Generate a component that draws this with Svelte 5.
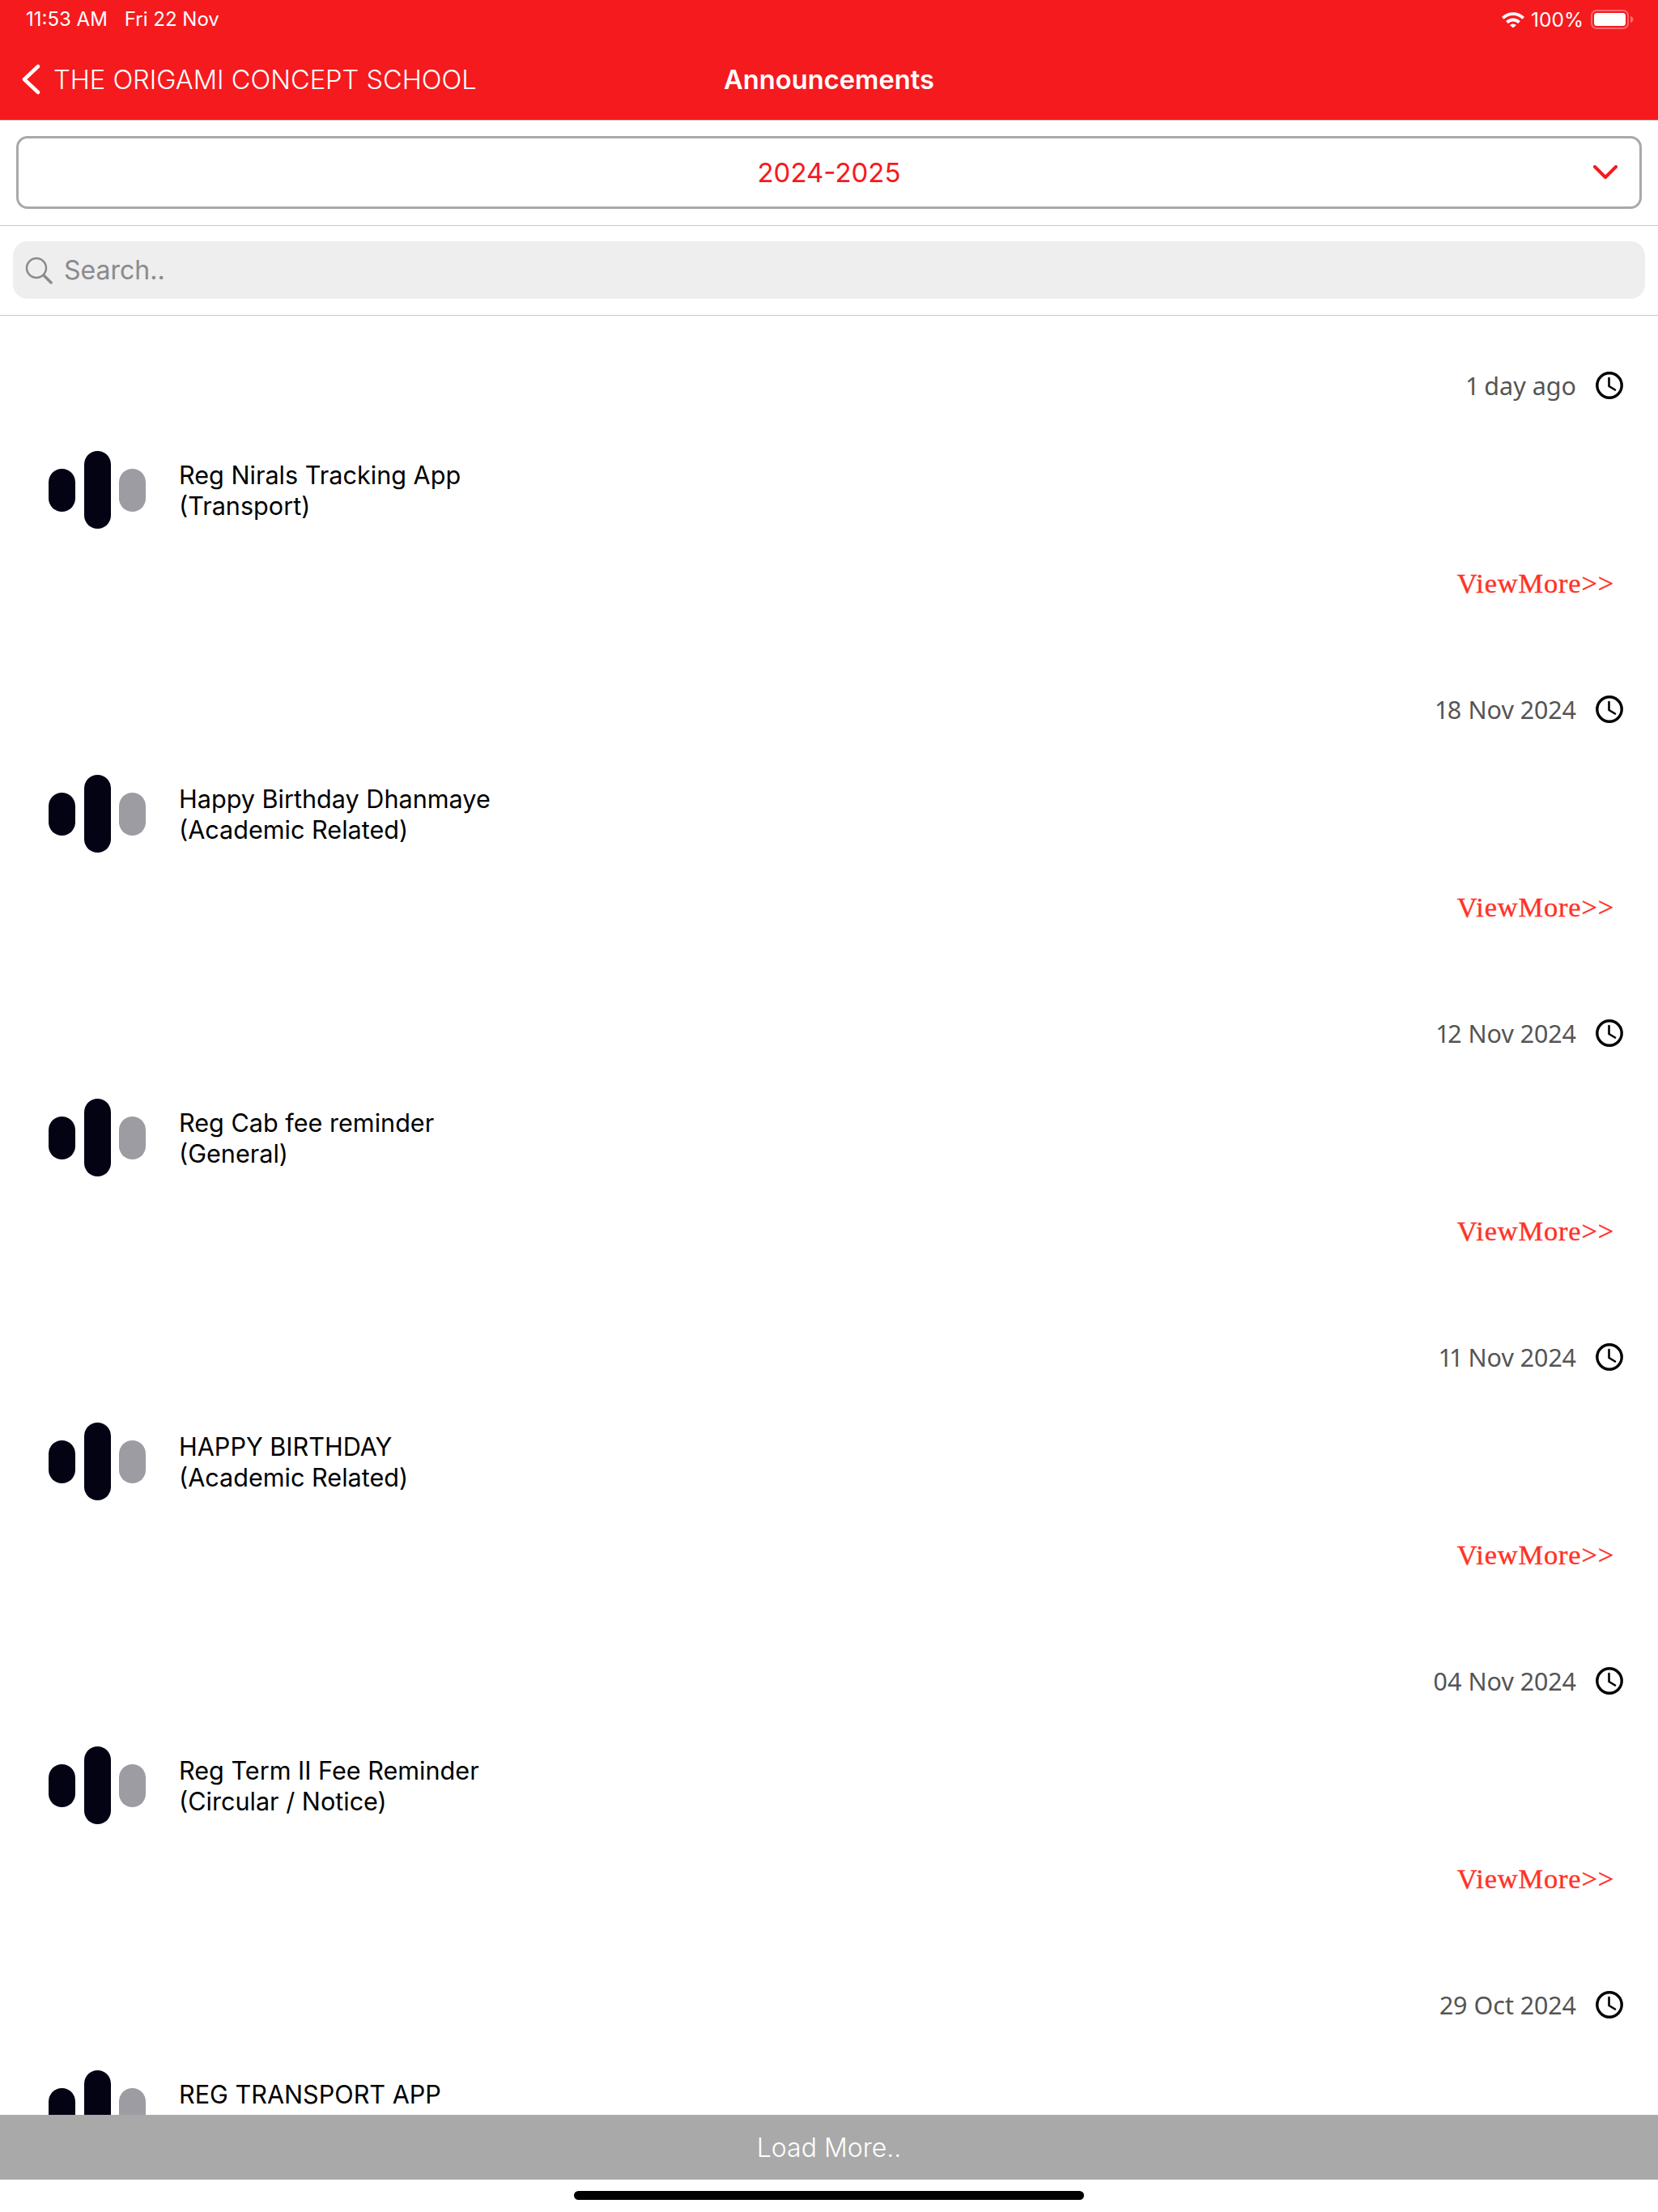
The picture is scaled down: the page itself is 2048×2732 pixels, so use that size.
<script>
  const rows = [
    { date: '1 day ago', title: 'Reg Nirals Tracking App', tag: '(Transport)' },
    { date: '18 Nov 2024', title: 'Happy Birthday Dhanmaye', tag: '(Academic Related)' },
    { date: '12 Nov 2024', title: 'Reg Cab fee reminder', tag: '(General)' },
    { date: '11 Nov 2024', title: 'HAPPY BIRTHDAY', tag: '(Academic Related)' },
    { date: '04 Nov 2024', title: 'Reg Term II Fee Reminder', tag: '(Circular / Notice)' },
    { date: '29 Oct 2024', title: 'REG TRANSPORT APP', tag: '' }
  ];
</script>

<div class="page">
  <header class="head">
    <div class="status">
      <div class="status-left"><span>11:53 AM</span><span>Fri 22 Nov</span></div>
      <div class="status-right">
        <svg class="wifi" viewBox="0 0 28 20" width="28" height="20">
          <path d="M0 7 A20 20 0 0 1 28 7 L25.400 9.800 A16.200 16.200 0 0 0 2.600 9.800 Z" fill="#fff"/>
          <path d="M5.200 12.200 A12.500 12.500 0 0 1 22.800 12.200 L20.200 15 A8.800 8.800 0 0 0 7.800 15 Z" fill="#fff"/>
          <path d="M10 17 A5.800 5.800 0 0 1 18 17 L14 20.500 Z" fill="#fff"/>
        </svg>
        <span class="pct">100%</span>
        <svg class="batt" viewBox="0 0 53 24" width="53" height="24">
          <rect x="1" y="1" width="45" height="22" rx="6" fill="none" stroke="#fff" stroke-opacity=".35" stroke-width="2"/>
          <rect x="4" y="4" width="39" height="16" rx="3.500" fill="#fff"/>
          <path d="M49 8 C51.500 9 52.500 10.500 52.500 12 C52.500 13.500 51.500 15 49 16 Z" fill="#fff" fill-opacity=".4"/>
        </svg>
      </div>
    </div>
    <div class="nav">
      <div class="back">
        <svg viewBox="0 0 24 38" width="24" height="38"><path d="M21 3 L4 19 L21 35" fill="none" stroke="#fff" stroke-width="4.500" stroke-linecap="round" stroke-linejoin="round"/></svg>
        <span>THE ORIGAMI CONCEPT SCHOOL</span>
      </div>
      <div class="title">Announcements</div>
      <div></div>
    </div>
  </header>

  <div class="select-wrap">
    <div class="select">
      <span>2024-2025</span>
      <svg class="chev" viewBox="0 0 30 18" width="30" height="18"><path d="M2 2 L15 15 L28 2" fill="none" stroke="#f51a1e" stroke-width="4" stroke-linecap="round" stroke-linejoin="round"/></svg>
    </div>
  </div>

  <div class="search-wrap">
    <div class="search">
      <svg viewBox="0 0 34 34" width="34" height="34"><circle cx="14" cy="14" r="12" fill="none" stroke="#8a8a8e" stroke-width="2.500"/><path d="M23 23 L32 32" stroke="#8a8a8e" stroke-width="3.500" stroke-linecap="round"/></svg>
      <span>Search..</span>
    </div>
  </div>

  <main class="list">
    {#each rows as r}
      <article class="row">
        <div class="date">
          <span>{r.date}</span>
          <svg viewBox="0 0 34 34" width="34" height="34"><circle cx="17" cy="17" r="15.200" fill="none" stroke="#000" stroke-width="3.400"/><path d="M16.500 8 V18 L24 22.500" fill="none" stroke="#000" stroke-width="2.600" stroke-linecap="round" stroke-linejoin="round"/></svg>
        </div>
        <div class="body">
          <div class="bars"><i class="b side"></i><i class="b mid"></i><i class="b side grey"></i></div>
          <div class="text"><div>{r.title}</div>{#if r.tag}<div>{r.tag}</div>{/if}</div>
        </div>
        {#if r.tag}<div class="more">ViewMore&gt;&gt;</div>{/if}
      </article>
    {/each}
  </main>

  <div class="load">Load More..</div>
  <div class="home"><i></i></div>
</div>

<style>
  :global(body) { margin: 0; background: #fff; }
  .page { width: 2048px; height: 2732px; display: flex; flex-direction: column; overflow: hidden; font-family: Inter, sans-serif; background: #fff; }

  .head { height: 149px; box-sizing: border-box; background: #f51a1e; border-bottom: 1px solid #c8c8c8; color: #fff; flex: none; display: flex; flex-direction: column; }
  .status { height: 47px; flex: none; display: flex; justify-content: space-between; align-items: center; padding: 0 30px 0 32px; font-size: 24px; }
  .status-left { display: flex; gap: 21px; }
  .status-right { display: flex; align-items: center; }
  .pct { margin-left: 8px; font-size: 24.500px; }
  .batt { margin-left: 9px; }
  .nav { flex: 1; display: grid; grid-template-columns: 1fr auto 1fr; align-items: center; }
  .back { display: flex; align-items: center; gap: 16px; padding-left: 26px; font-size: 32.600px; font-weight: 300; white-space: nowrap; }
  .title { font-weight: 600; font-size: 32.700px; }

  .select-wrap { height: 130px; box-sizing: border-box; padding: 19px 20px 0 20px; border-bottom: 1px solid #c8c8c8; flex: none; }
  .select { height: 90px; box-sizing: border-box; border: 3px solid #a9a9a9; border-radius: 14px; display: flex; align-items: center; justify-content: center; position: relative; color: #f51a1e; font-size: 33px; }
  .chev { position: absolute; right: 27px; top: 33px; }

  .search-wrap { height: 111px; box-sizing: border-box; padding: 19px 16px 0 16px; border-bottom: 1px solid #c8c8c8; flex: none; }
  .search { height: 71px; border-radius: 18px; background: #eeeeee; display: flex; align-items: center; padding-left: 15px; gap: 14px; color: #8a8a8e; font-size: 32px; }

  .list { flex: 1; min-height: 0; overflow: hidden; }
  .row { height: 400px; position: relative; box-sizing: border-box; }
  .date { position: absolute; right: 43px; top: 69px; display: flex; align-items: center; gap: 24px; color: #555; font-family: "Noto Sans", sans-serif; font-size: 30.500px; font-variant-numeric: proportional-nums; height: 34px; }
  .body { position: absolute; left: 60px; top: 167px; display: flex; align-items: flex-start; gap: 41px; }
  .bars { display: flex; align-items: center; gap: 10.500px; }
  .b { display: block; width: 33px; border-radius: 17px; background: #030314; }
  .side { height: 53px; }
  .mid { height: 96px; }
  .grey { background: #9d9ca3; }
  .text { font-size: 30.600px; line-height: 38px; color: #000; padding-top: 11px; }
  .more { position: absolute; right: 54px; top: 310px; color: #ff3327; font-family: "Liberation Serif", serif; font-size: 34.500px; line-height: 40px; letter-spacing: .8px; -webkit-text-stroke: .4px #ff3327; }

  .load { flex: none; height: 80px; background: #a9a9a9; color: #fff; display: flex; align-items: center; justify-content: center; font-weight: 300; font-size: 32px; }
  .home { flex: none; height: 40px; padding-top: 14px; box-sizing: border-box; display: flex; justify-content: center; }
  .home i { display: block; width: 630px; height: 11px; background: #000; border-radius: 6px; }
</style>
